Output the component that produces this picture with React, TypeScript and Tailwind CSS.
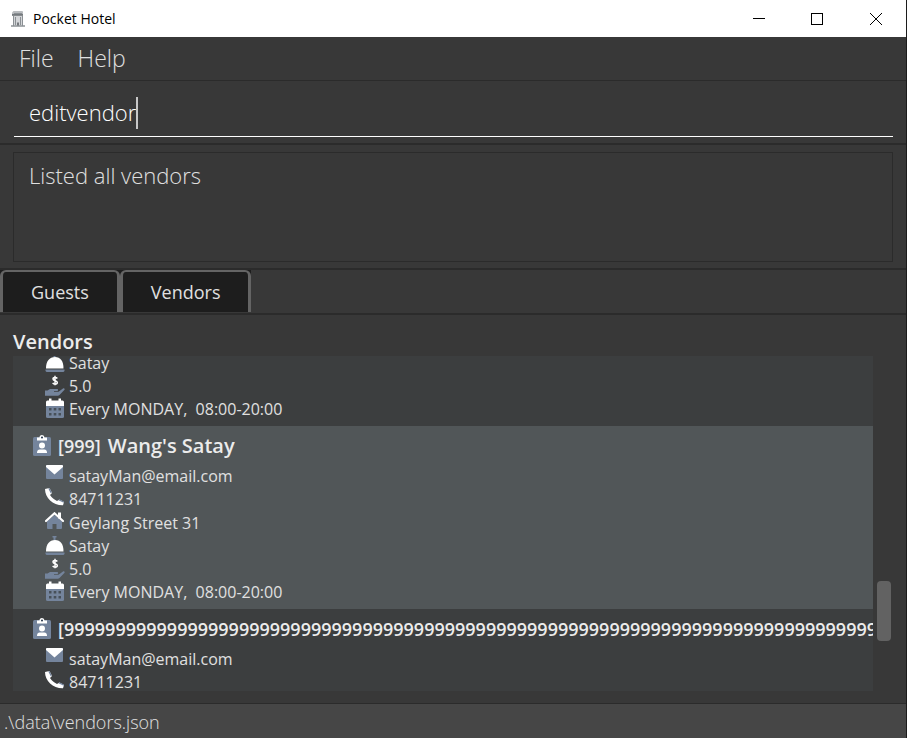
import React from "react";

const SLATE = "#74849c";

const icons = {
  email: (
    <svg width="20" height="16" viewBox="0 0 20 16" aria-hidden="true">
      <rect x="1" y="0" width="17" height="14" rx="1" fill={SLATE} />
      <path d="M2 0h15a1 1 0 0 1 1 1v1L9.500 9.500 1 2V1a1 1 0 0 1 1-1z" fill="#fff" />
    </svg>
  ),
  phone: (
    <svg width="20" height="18" viewBox="0 0 20 18" aria-hidden="true">
      <path d="M0 1 L4.500 0 L7 5 L5 7 C7 10 9 11.500 12 13 L14.500 11.500 L19 14 L18 17.300 C8 17.500 0 10 0 1z" fill="#fff" />
      <path d="M4.500 0 6.800 4.600 5.700 5.300 3.300 0.400zM14.300 11.200 19 13.400 18.700 14.700 13.400 12.300z" fill={SLATE} />
    </svg>
  ),
  home: (
    <svg width="20" height="18" viewBox="0 0 20 18" aria-hidden="true">
      <path d="M9.500 3 L17 9.500v6.500a1 1 0 0 1-1 1h-4.500v-5h-4v5H3a1 1 0 0 1-1-1V9.500z" fill={SLATE} />
      <path d="M13 .5h3v6h-3z" fill="#fff" />
      <path d="M1 9 9.500 1.300 18 9" fill="none" stroke="#fff" strokeWidth="2.200" strokeLinecap="round" />
    </svg>
  ),
  food: (
    <svg width="20" height="20" viewBox="0 0 20 20" aria-hidden="true">
      <path d="M7.500 1h4v1.500h-1V5h-2V2.500h-1zM0.500 17.500h19V19l-1 1h-17l-1-1z" fill={SLATE} />
      <path d="M1 16.500C1 9 4.500 5 10 5s8.500 4 8.500 11.500z" fill="#fff" />
    </svg>
  ),
  cost: (
    <svg width="20" height="21" viewBox="0 0 20 21" aria-hidden="true">
      <path
        d="M12.300 3.500C11.800 2.700 11 2.400 10 2.400c-1.300 0-2 .7-2 1.600 0 2.200 4.300 1.100 4.300 3.400 0 1-.9 1.600-2.200 1.600-1.100 0-1.900-.4-2.400-1.200M10 .8v9.400"
        fill="none"
        stroke="#fff"
        strokeWidth="1.500"
      />
      <path d="M0 15.500h2.500L5 14h7c1.500 0 1.500 2 0 2H9v.7h4.500L18 13.500c1.200-.7 2.200.5 1.300 1.400L14.500 20q-.7.700-1.700.7H0z" fill={SLATE} />
    </svg>
  ),
  calendar: (
    <svg width="20" height="21" viewBox="0 0 20 21" aria-hidden="true">
      <path d="M1 8h18v10.500a1.500 1.500 0 0 1-1.500 1.500h-15A1.500 1.500 0 0 1 1 18.500z" fill={SLATE} />
      <path d="M1 8V4A1.500 1.500 0 0 1 2.500 2.500H4V.5h2.500v2h7v-2H16v2h1.500A1.500 1.500 0 0 1 19 4v4z" fill="#fff" />
      <path d="M4 10h2.500v2.500H4zM8.700 10h2.600v2.500H8.700zM13.500 10H16v2.500h-2.500zM4 15h2.500v2.500H4zM8.700 15h2.600v2.500H8.700zM13.500 15H16v2.500h-2.500z" fill="#475059" />
    </svg>
  ),
};

function BadgeIcon() {
  return (
    <svg className="shrink-0" width="18" height="21" viewBox="0 0 18 21" aria-hidden="true">
      <rect x="0" y="2" width="18" height="19" rx="1.500" fill={SLATE} />
      <path d="M4 2.500h2.500a2.500 2.500 0 0 1 5 0H14V5.500H4z" fill="#fff" />
      <circle cx="9" cy="2.500" r="1" fill="#1f3046" />
      <circle cx="9" cy="10.500" r="3" fill="#fff" />
      <path d="M4 18c0-3 1.500-3.500 3-3.500h4c1.500 0 3 .5 3 3.500z" fill="#fff" />
    </svg>
  );
}

function HotelIcon() {
  return (
    <svg width="14" height="16" viewBox="0 0 14 16" aria-hidden="true">
      <path d="M1 1.500 2.500 0h9L12 1v3H1z" fill="#b9bcbf" />
      <path d="M3 2.500h8" stroke="#8b9094" />
      <path d="M1 4h11" stroke="#5f6468" strokeWidth="1.500" />
      <path d="M2 5h10v9.500H2z" fill="#d3d5d8" />
      <path d="M2.500 5v10M4.500 6v8M9.500 6v8M11.500 5v10" stroke="#8b9094" />
      <path d="M6 11.500h2V15H6z" fill="#75797d" />
      <path d="M0 15h14" stroke="#8b9094" strokeWidth="1.500" />
    </svg>
  );
}

type Field = { icon: keyof typeof icons; text: string };
type Vendor = { id: string; name: string; selected?: boolean; fields: Field[] };

const schedule: Field[] = [
  { icon: "food", text: "Satay" },
  { icon: "cost", text: "5.0" },
  { icon: "calendar", text: "Every MONDAY,  08:00-20:00" },
];
const contact: Field[] = [
  { icon: "email", text: "satayMan@email.com" },
  { icon: "phone", text: "84711231" },
];

const vendors: Vendor[] = [
  {
    id: "999",
    name: "Wang's Satay",
    selected: true,
    fields: [...contact, { icon: "home", text: "Geylang Street 31" }, ...schedule],
  },
  { id: "9".repeat(90), name: "", fields: contact },
];

function FieldRow({ icon, text }: Field) {
  return (
    <li className={`flex shrink-0 items-start gap-1 pl-8 whitespace-pre ${icon === "phone" ? "h-6" : "h-[23px]"}`}>
      <span className="w-5 shrink-0">{icons[icon]}</span>
      <span className="text-base leading-[23px]">{text}</span>
    </li>
  );
}

function VendorCard({ vendor }: { vendor: Vendor }) {
  return (
    <article className={`shrink-0 pb-[5px] ${vendor.selected ? "bg-[#515658]" : "bg-[#3c3e3f]"}`}>
      <h3 className="flex h-[39px] items-center gap-[7px] overflow-hidden pl-5 font-semibold whitespace-nowrap text-[#ececec]">
        <BadgeIcon />
        <span className="text-lg">[{vendor.id}]</span>
        {vendor.name && <span className="text-xl">{vendor.name}</span>}
      </h3>
      <ul>
        {vendor.fields.map((f) => (
          <FieldRow key={f.icon} {...f} />
        ))}
      </ul>
    </article>
  );
}

export default function App() {
  return (
    <div className="flex h-screen flex-col overflow-hidden border-r border-[#1c1c1c] bg-[#383838] font-['Open_Sans','Noto_Sans',sans-serif] text-[#e0e0e0]">
      <header className="flex h-[37px] shrink-0 items-center bg-white pl-[11px] text-black">
        <HotelIcon />
        <h1 className="ml-2 flex-1 text-sm">Pocket Hotel</h1>
        <button aria-label="Minimize" className="flex h-full w-[58px] items-center justify-center">
          <svg width="12" height="12"><path d="M0 5.500h12" stroke="#000" /></svg>
        </button>
        <button aria-label="Maximize" className="flex h-full w-[58px] items-center justify-center">
          <svg width="12" height="12"><rect x=".5" y=".5" width="11" height="11" fill="none" stroke="#000" /></svg>
        </button>
        <button aria-label="Close" className="flex h-full w-[60px] items-center justify-center">
          <svg width="12" height="12"><path d="M0 0l12 12M12 0L0 12" stroke="#000" /></svg>
        </button>
      </header>

      <nav className="flex h-11 shrink-0 items-center gap-6 border-b border-[#2b2b2b] pb-0.5 pl-[19px] text-[23px] leading-8 font-light">
        <button>File</button>
        <button>Help</button>
      </nav>

      <section className="h-16 shrink-0 border-b-2 border-[#2b2b2b] pt-4 pr-[13px] pl-3.5">
        <label className="flex h-10 items-start border-b border-white pl-[15px]">
          <input
            aria-label="Command"
            defaultValue="editvendor"
            className="h-[30px] min-w-0 bg-transparent text-[22px] font-light text-white outline-none [field-sizing:content]"
          />
          <span className="h-8 w-0.5 bg-[#c8c8c8]" />
        </label>
      </section>

      <section className="h-[125px] shrink-0 border-b-2 border-[#2b2b2b] px-[13px] py-[7px]">
        <output className="block h-[110px] border border-[#2b2b2b] px-[15px] py-1.5 text-[22px] leading-8 font-light">
          Listed all vendors
        </output>
      </section>

      <div role="tablist" className="flex h-[45px] shrink-0 items-start border-b-2 border-[#2b2b2b]">
        <div className="flex h-[42px] bg-[#1d1d1d] text-lg">
          <button role="tab" className="rounded-t-md border-x-[3px] border-t-2 border-[#646464] px-7">Guests</button>
          <button role="tab" aria-selected="true" className="rounded-t-md border-x-[3px] border-t-2 border-[#646464] px-7">Vendors</button>
        </div>
      </div>

      <main className="flex min-h-0 flex-1 flex-col px-[13px] pt-3 pb-3">
        <h2 className="h-[29px] shrink-0 text-xl leading-[29px] font-semibold text-[#ececec]">Vendors</h2>
        <div className="flex min-h-0 flex-1">
          <div className="flex min-w-0 flex-1 flex-col overflow-hidden bg-[#3c3e3f]">
            <div className="flex h-[70px] shrink-0 flex-col justify-end overflow-hidden pb-[5px]">
              <ul>
                {schedule.map((f) => (
                  <FieldRow key={f.icon} {...f} />
                ))}
              </ul>
            </div>
            {vendors.map((v) => (
              <VendorCard key={v.id} vendor={v} />
            ))}
          </div>
          <div className="flex w-5 shrink-0 flex-col items-end pr-0.5 pb-[50px]">
            <div className="mt-auto h-[60px] w-3.5 rounded bg-[#626262]" />
          </div>
        </div>
      </main>

      <footer className="h-[35px] shrink-0 border-t border-[#2b2b2b] bg-[#464646] pl-1 text-lg leading-9 font-light">
        .\data\vendors.json
      </footer>
    </div>
  );
}
